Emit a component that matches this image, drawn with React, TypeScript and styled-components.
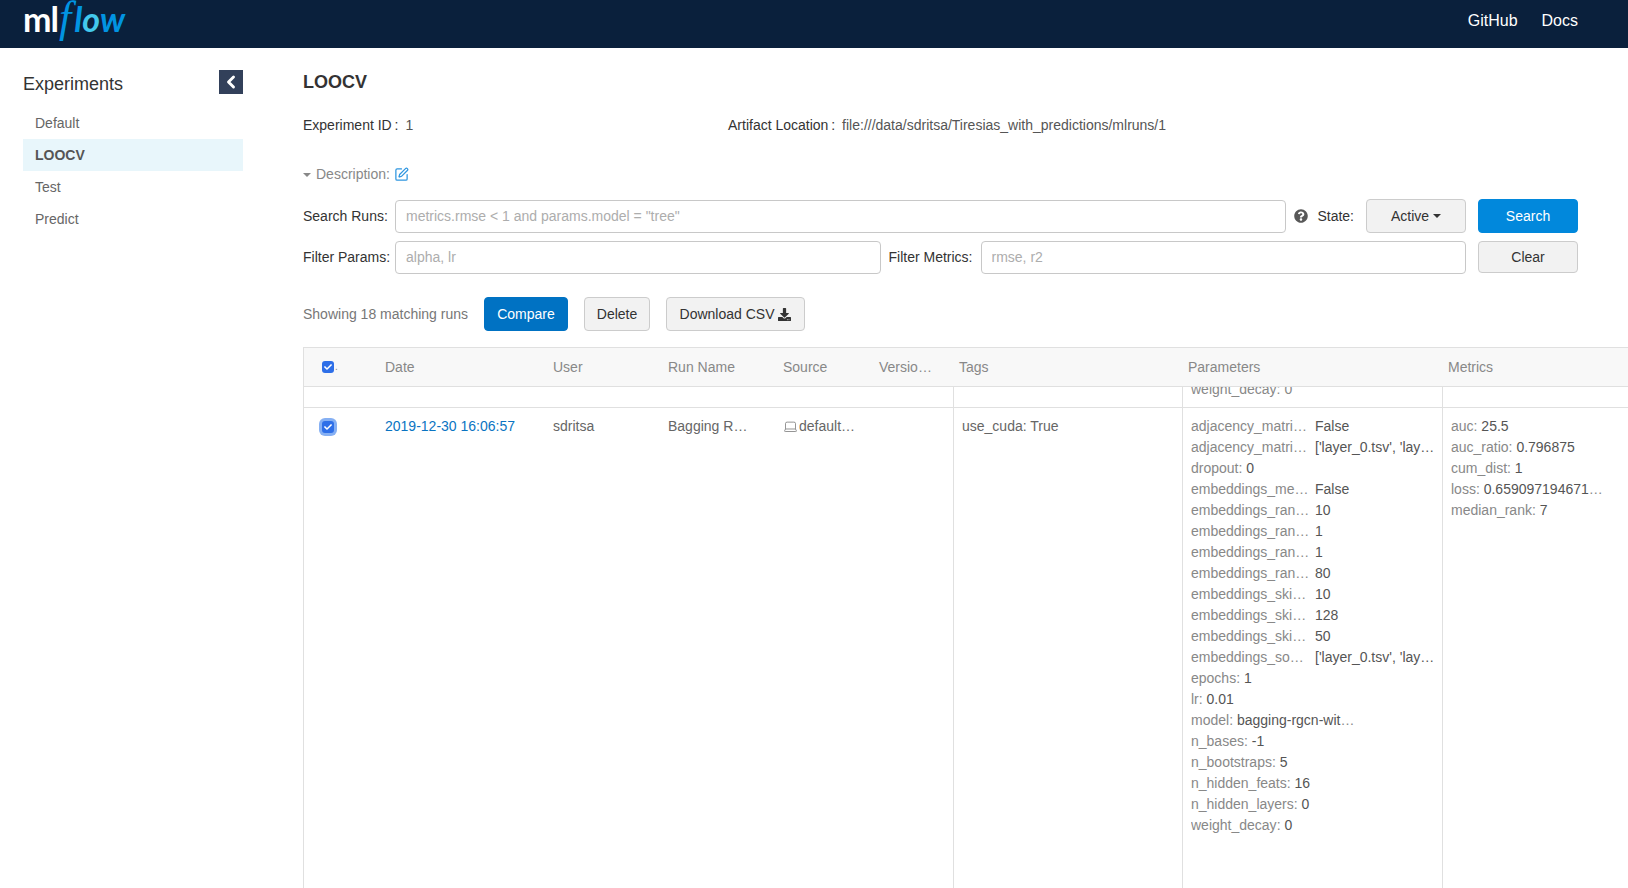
import React from 'react';
import styled, { createGlobalStyle } from 'styled-components';
import { ChevronLeft, Laptop, SquarePen } from 'lucide-react';
import { FaCheck, FaDownload, FaQuestionCircle } from 'react-icons/fa';

const GlobalStyle = createGlobalStyle`
  html, body, #root {
    height: 100%;
    margin: 0;
  }
  body {
    overflow: hidden;
    background: #fff;
    color: #333;
    font-family: "Liberation Sans", Arial, sans-serif;
    font-size: 14px;
    line-height: 21px;
  }
  * {
    box-sizing: border-box;
  }
`;

const Page = styled.div`
  height: 888px;
  display: flex;
  flex-direction: column;
  overflow: hidden;
`;

const Navbar = styled.header`
  height: 48px;
  flex: none;
  background: #0a203c;
  display: flex;
  align-items: flex-start;
  justify-content: space-between;
  padding: 0 50px 0 23px;
`;

const Logo = styled.div`
  display: flex;
  align-items: baseline;
  height: 48px;
  line-height: 36px;
  white-space: nowrap;
`;

const LogoMl = styled.span`
  font-family: Lato, sans-serif;
  font-size: 34px;
  font-weight: 700;
  letter-spacing: -1px;
  color: #fff;
`;

const LogoF = styled.span`
  font-family: "Liberation Serif", serif;
  font-style: italic;
  font-size: 44px;
  color: #0194e2;
  margin: 0 3px 0 1px;
`;

const LogoFlow = styled.span<{ $light?: boolean }>`
  font-family: Lato, sans-serif;
  font-style: italic;
  font-size: 34px;
  font-weight: 700;
  color: ${(p) => (p.$light ? '#43c9ed' : '#0194e2')};
`;

const NavLinks = styled.nav`
  display: flex;
  gap: 24px;
  height: 40px;
  align-items: center;
`;

const NavLink = styled.a`
  color: #fff;
  font-size: 16px;
  text-decoration: none;
`;

const Content = styled.div`
  flex: 1;
  min-height: 0;
  display: flex;
`;

const Sidebar = styled.aside`
  width: 220px;
  flex: none;
  margin: 22px 60px 0 23px;
`;

const SidebarHead = styled.div`
  height: 24px;
  display: flex;
  align-items: center;
  justify-content: space-between;
  margin-bottom: 13px;
`;

const SidebarTitle = styled.div`
  font-size: 18px;
  padding-top: 4px;
  color: #333;
`;

const CollapseButton = styled.button`
  width: 24px;
  height: 24px;
  padding: 0;
  border: 0;
  background: #32405a;
  color: #fff;
  display: flex;
  align-items: center;
  justify-content: center;
`;

const SidebarItem = styled.div<{ $active?: boolean }>`
  height: 32px;
  line-height: 32px;
  padding-left: 12px;
  color: ${(p) => (p.$active ? '#555' : '#666')};
  background: ${(p) => (p.$active ? '#e8f6fb' : 'transparent')};
  font-weight: ${(p) => (p.$active ? 700 : 400)};
`;

const Main = styled.main`
  flex: 1;
  min-width: 0;
  display: flex;
  flex-direction: column;
  padding-top: 22px;
`;

const Title = styled.h1`
  margin: 0;
  font-size: 18px;
  line-height: 24px;
  font-weight: 700;
  color: #333;
`;

const Meta = styled.div`
  display: grid;
  grid-template-columns: 425px 1fr;
  margin-top: 21px;
  height: 21px;
`;

const MetaItem = styled.div`
  display: flex;
  gap: 7px;
`;

const MetaValue = styled.span`
  color: #555;
`;

const Description = styled.div`
  display: flex;
  align-items: center;
  margin-top: 28px;
  height: 21px;
  color: #888;
`;

const Caret = styled.span<{ $color?: string }>`
  display: inline-block;
  width: 0;
  height: 0;
  border-left: 4px solid transparent;
  border-right: 4px solid transparent;
  border-top: 4px solid ${(p) => p.$color || '#888'};
`;

const DescriptionLabel = styled.span`
  margin: 0 4px 0 5px;
`;

const FormRow = styled.div<{ $top: number }>`
  display: flex;
  align-items: center;
  height: 34px;
  margin-top: ${(p) => p.$top}px;
  margin-right: 50px;
`;

const FieldLabel = styled.label<{ $gap?: number }>`
  width: 92px;
  flex: none;
  margin-left: ${(p) => p.$gap || 0}px;
  color: #333;
`;

const TextInput = styled.input`
  flex: 1;
  min-width: 0;
  height: 33px;
  border: 1px solid #c8c8c8;
  border-radius: 4px;
  padding: 0 10px;
  font: inherit;
  color: #333;
  outline: none;

  &::placeholder {
    color: #adadad;
    opacity: 1;
  }
`;

const HelpIcon = styled.span`
  display: flex;
  color: #585858;
  margin: 0 9px 0 8px;
`;

const StateLabel = styled.span`
  margin-right: 12px;
  color: #333;
`;

const Button = styled.button<{ $tone?: 'primary' | 'compare'; $width?: number; $short?: boolean }>`
  height: ${(p) => (p.$short ? 32 : 34)}px;
  width: ${(p) => (p.$width ? `${p.$width}px` : 'auto')};
  flex: none;
  padding: 0 12px;
  border-radius: 4px;
  border: 1px solid
    ${(p) => (p.$tone === 'primary' ? '#0188dc' : p.$tone === 'compare' ? '#0072c3' : '#ccc')};
  background: ${(p) => (p.$tone === 'primary' ? '#0188dc' : p.$tone === 'compare' ? '#0072c3' : '#f2f2f2')};
  color: ${(p) => (p.$tone ? '#fff' : '#333')};
  font: inherit;
  display: inline-flex;
  align-items: center;
  justify-content: center;
  gap: 4px;
`;

const ActionGap = styled.span`
  width: 12px;
  flex: none;
`;

const Toolbar = styled.div`
  display: flex;
  align-items: center;
  gap: 16px;
  height: 34px;
  margin-top: 23px;
`;

const RunCount = styled.span`
  color: #777;
`;

const Table = styled.section`
  flex: 1;
  min-height: 0;
  margin-top: 16px;
  border-left: 1px solid #e0e0e0;
  display: flex;
  flex-direction: column;
  min-width: 1400px;
`;

const columns = '81px 168px 115px 115px 96px 74px 229px 260px 1fr';

const HeaderRow = styled.div`
  display: grid;
  grid-template-columns: ${columns};
  height: 40px;
  align-items: center;
  background: #f8f8f8;
  border-top: 1px solid #e0e0e0;
  border-bottom: 1px solid #e0e0e0;
  color: #888;
`;

const HeaderCell = styled.div<{ $pad?: number }>`
  padding-left: ${(p) => p.$pad || 0}px;
  white-space: nowrap;
`;

const CheckCell = styled.div`
  display: flex;
  align-items: center;
  padding-left: 18px;
`;

const RowCheckCell = styled(CheckCell)`
  align-items: flex-start;
  padding-top: 13px;
`;

const CheckBox = styled.span<{ $focused?: boolean }>`
  width: 12px;
  height: 12px;
  flex: none;
  border-radius: 3px;
  background: #2e6fe8;
  color: #fff;
  display: flex;
  align-items: center;
  justify-content: center;
  ${(p) => p.$focused && 'box-shadow: 0 0 0 3px #86b0f3;'}
`;

const Dot = styled.span`
  font-size: 10px;
  line-height: 12px;
  color: #888;
  align-self: flex-end;
  margin-left: 1px;
`;

const SpacerRow = styled.div`
  display: grid;
  grid-template-columns: ${columns};
  height: 21px;
  flex: none;
  overflow: hidden;
  border-bottom: 1px solid #e0e0e0;
`;

const SpacerCell = styled.div<{ $border?: boolean; $column?: number }>`
  grid-column: ${(p) => p.$column || 'auto'};
  ${(p) => p.$border && 'border-left: 1px solid #e0e0e0;'}
  display: flex;
  align-items: flex-end;
  padding: 0 0 7px 8px;
  height: 20px;
  color: #888;
  white-space: nowrap;
`;

const DataRow = styled.div`
  flex: 1;
  min-height: 0;
  display: grid;
  grid-template-columns: ${columns};
  color: #666;
`;

const DataCell = styled.div<{ $right?: number; $border?: boolean; $pad?: number }>`
  padding-top: 8px;
  padding-left: ${(p) => p.$pad || 0}px;
  padding-right: ${(p) => p.$right || 0}px;
  min-width: 0;
  white-space: nowrap;
  overflow: hidden;
  text-overflow: ellipsis;
  ${(p) => p.$border && 'border-left: 1px solid #e0e0e0;'}
`;

const DateLink = styled.a`
  color: #0a74c2;
  text-decoration: none;
`;

const SourceLine = styled.div`
  display: flex;
  align-items: center;
  gap: 1px;
  color: #666;
`;

const SourceName = styled.span`
  overflow: hidden;
  text-overflow: ellipsis;
`;

const LaptopIcon = styled(Laptop)`
  flex: none;
  color: #777;
`;

const KvLine = styled.div`
  display: flex;
  height: 21px;
  line-height: 21px;
  white-space: nowrap;
`;

const KvKey = styled.span`
  width: 120px;
  margin-right: 4px;
  flex: none;
  overflow: hidden;
  text-overflow: ellipsis;
  color: #888;
`;

const KvValue = styled.span`
  width: 123px;
  overflow: hidden;
  text-overflow: ellipsis;
  color: #555;
`;

const PlainLine = styled.div<{ $width?: number }>`
  height: 21px;
  line-height: 21px;
  white-space: nowrap;
  overflow: hidden;
  text-overflow: ellipsis;
  color: #888;
  ${(p) => p.$width && `width: ${p.$width}px;`}

  b {
    font-weight: 400;
    color: #555;
  }
`;

const params: Array<{ key: string; value: string; col?: boolean; width?: number }> = [
  { key: 'adjacency_matrix_dropout', value: 'False', col: true },
  { key: 'adjacency_matrix_sources', value: "['layer_0.tsv', 'layer_1.tsv']", col: true },
  { key: 'dropout', value: '0' },
  { key: 'embeddings_merge_mode', value: 'False', col: true },
  { key: 'embeddings_random_size', value: '10', col: true },
  { key: 'embeddings_random_min', value: '1', col: true },
  { key: 'embeddings_random_walks', value: '1', col: true },
  { key: 'embeddings_random_dim', value: '80', col: true },
  { key: 'embeddings_skipgram_w', value: '10', col: true },
  { key: 'embeddings_skipgram_d', value: '128', col: true },
  { key: 'embeddings_skipgram_n', value: '50', col: true },
  { key: 'embeddings_sources', value: "['layer_0.tsv', 'layer_1.tsv']", col: true },
  { key: 'epochs', value: '1' },
  { key: 'lr', value: '0.01' },
  { key: 'model', value: 'bagging-rgcn-with-embeddings', width: 164 },
  { key: 'n_bases', value: '-1' },
  { key: 'n_bootstraps', value: '5' },
  { key: 'n_hidden_feats', value: '16' },
  { key: 'n_hidden_layers', value: '0' },
  { key: 'weight_decay', value: '0' },
];

const metrics: Array<{ key: string; value: string; width?: number }> = [
  { key: 'auc', value: '25.5' },
  { key: 'auc_ratio', value: '0.796875' },
  { key: 'cum_dist', value: '1' },
  { key: 'loss', value: '0.6590971946716309', width: 158 },
  { key: 'median_rank', value: '7' },
];

const App = () => {
  return (
    <Page>
      <GlobalStyle />
      <Navbar>
        <Logo>
          <LogoMl>ml</LogoMl>
          <LogoF>f</LogoF>
          <LogoFlow>l</LogoFlow>
          <LogoFlow $light>o</LogoFlow>
          <LogoFlow>w</LogoFlow>
        </Logo>
        <NavLinks>
          <NavLink>GitHub</NavLink>
          <NavLink>Docs</NavLink>
        </NavLinks>
      </Navbar>
      <Content>
        <Sidebar>
          <SidebarHead>
            <SidebarTitle>Experiments</SidebarTitle>
            <CollapseButton>
              <ChevronLeft size={20} strokeWidth={3.5} />
            </CollapseButton>
          </SidebarHead>
          <SidebarItem>Default</SidebarItem>
          <SidebarItem $active>LOOCV</SidebarItem>
          <SidebarItem>Test</SidebarItem>
          <SidebarItem>Predict</SidebarItem>
        </Sidebar>
        <Main>
          <Title>LOOCV</Title>
          <Meta>
            <MetaItem>
              <span>Experiment ID{'\u2009'}:</span>
              <MetaValue>1</MetaValue>
            </MetaItem>
            <MetaItem>
              <span>Artifact Location{'\u2009'}:</span>
              <MetaValue>file:///data/sdritsa/Tiresias_with_predictions/mlruns/1</MetaValue>
            </MetaItem>
          </Meta>
          <Description>
            <Caret />
            <DescriptionLabel>Description:</DescriptionLabel>
            <SquarePen size={15} color="#2f96e0" />
          </Description>
          <FormRow $top={14}>
            <FieldLabel>Search Runs:</FieldLabel>
            <TextInput placeholder={'metrics.rmse < 1 and params.model = "tree"'} />
            <HelpIcon>
              <FaQuestionCircle size={14} />
            </HelpIcon>
            <StateLabel>State:</StateLabel>
            <Button $width={100}>
              Active <Caret $color="#333" />
            </Button>
            <ActionGap />
            <Button $tone="primary" $width={100}>
              Search
            </Button>
          </FormRow>
          <FormRow $top={7}>
            <FieldLabel>Filter Params:</FieldLabel>
            <TextInput placeholder="alpha, lr" />
            <FieldLabel $gap={8}>Filter Metrics:</FieldLabel>
            <TextInput placeholder="rmse, r2" />
            <ActionGap />
            <Button $width={100} $short>
              Clear
            </Button>
          </FormRow>
          <Toolbar>
            <RunCount>Showing 18 matching runs</RunCount>
            <Button $tone="compare" $width={84}>
              Compare
            </Button>
            <Button $width={66}>Delete</Button>
            <Button $width={139}>
              Download CSV <FaDownload size={13} />
            </Button>
          </Toolbar>
          <Table>
            <HeaderRow>
              <CheckCell>
                <CheckBox>
                  <FaCheck size={8} />
                </CheckBox>
                <Dot>.</Dot>
              </CheckCell>
              <HeaderCell>Date</HeaderCell>
              <HeaderCell>User</HeaderCell>
              <HeaderCell>Run Name</HeaderCell>
              <HeaderCell>Source</HeaderCell>
              <HeaderCell>Versio…</HeaderCell>
              <HeaderCell $pad={6}>Tags</HeaderCell>
              <HeaderCell $pad={6}>Parameters</HeaderCell>
              <HeaderCell $pad={6}>Metrics</HeaderCell>
            </HeaderRow>
            <SpacerRow>
              <SpacerCell $column={7} $border />
              <SpacerCell $border>weight_decay: 0</SpacerCell>
              <SpacerCell $border />
            </SpacerRow>
            <DataRow>
              <RowCheckCell>
                <CheckBox $focused>
                  <FaCheck size={8} />
                </CheckBox>
              </RowCheckCell>
              <DataCell>
                <DateLink>2019-12-30 16:06:57</DateLink>
              </DataCell>
              <DataCell>sdritsa</DataCell>
              <DataCell $right={30}>Bagging RGCN</DataCell>
              <DataCell $right={22}>
                <SourceLine>
                  <LaptopIcon size={15} strokeWidth={1.25} />
                  <SourceName>default_pipeline</SourceName>
                </SourceLine>
              </DataCell>
              <DataCell />
              <DataCell $border $pad={8}>
                use_cuda: True
              </DataCell>
              <DataCell $border $pad={8}>
                {params.map((p) =>
                  p.col ? (
                    <KvLine key={p.key + p.value}>
                      <KvKey>{p.key}</KvKey>
                      <KvValue>{p.value}</KvValue>
                    </KvLine>
                  ) : (
                    <PlainLine key={p.key} $width={p.width}>
                      {p.key}: <b>{p.value}</b>
                    </PlainLine>
                  ),
                )}
              </DataCell>
              <DataCell $border $pad={8}>
                {metrics.map((m) => (
                  <PlainLine key={m.key} $width={m.width}>
                    {m.key}: <b>{m.value}</b>
                  </PlainLine>
                ))}
              </DataCell>
            </DataRow>
          </Table>
        </Main>
      </Content>
    </Page>
  );
};

export default App;
